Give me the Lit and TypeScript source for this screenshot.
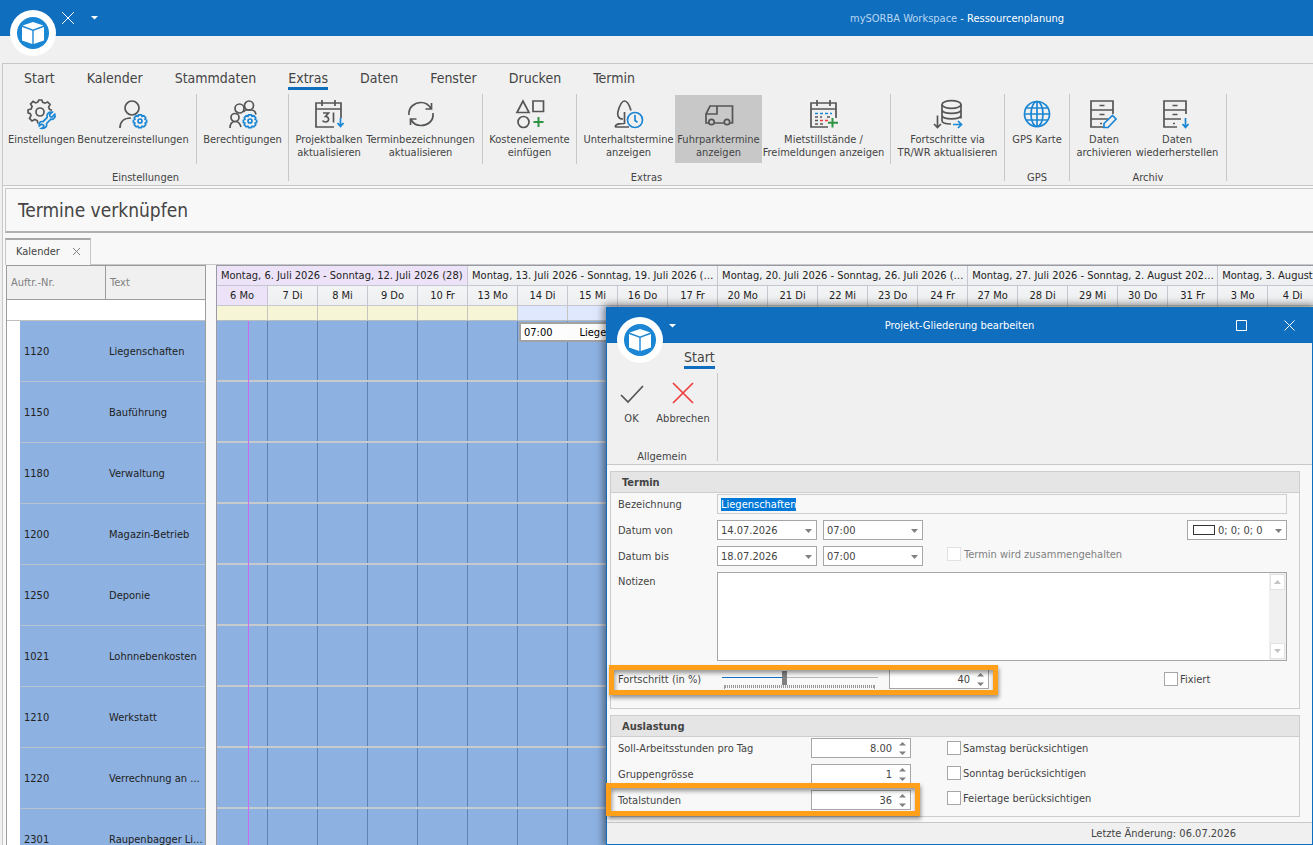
import { LitElement, html, css, svg, nothing, TemplateResult } from "lit";
import { customElement, query } from "lit/decorators.js";
import { classMap } from "lit/directives/class-map.js";
import { styleMap } from "lit/directives/style-map.js";

const gear = svg`<g class="b" transform="translate(21 21)"><path d="M-1.4 -6.2h2.8l.7 1.6 1.7-.6 1.9 1.9-.6 1.7 1.5.7v2.4l-1.5.7.6 1.7-1.9 1.9-1.7-.6-.7 1.4h-2.8l-.7-1.4-1.7.6-1.9-1.9.6-1.7-1.5-.7v-2.4l1.5-.7-.6-1.7 1.9-1.9 1.7.6z"/><circle r="2"/></g>`;

const cabinet = svg`<path d="M23 14V1H1v26h13M1 10h22M1 19h17M9.500 5.500h5M9.500 14.500h5M10 23.500h2"/>`;

const ICONS: Record<string, TemplateResult<2>> = {
  settings: svg`<circle cx="12" cy="12" r="4"/><path d="M10 23.500l-.8-3-2.400-1-2.800 1.500-2.500-2.600 1.500-2.700-.7-2.100-2.200-.8V9.800l3-.8 1-2.400-1.500-2.700 2.500-2.500 2.700 1.500 2.200-1L10.800 0h3l.9 2.300 2.300.9L19.600 2l2.500 2.500-1.500 2.700.9 2.200 2.500.8"/><path class="b" d="M26.800 14.200l-2.800 2.800-1.900-.4-.5-2 2.600-2.400c-3.500-.8-6 1.900-5 5.200l-4.200 4.300c-2.600-.8-4.500 1.200-3.700 4.300l2.200-1.800 2 .8.300 2.100-2.100 1.200c3.600.6 5.500-2 4.900-4.800l4.200-4.300c3 .7 5-2 4-5z"/>`,
  user: svg`<circle cx="13" cy="8" r="7"/><path d="M1 28c0-6.500 4-10 11-10"/>${gear}`,
  users: svg`<circle cx="10.500" cy="8.500" r="4.500"/><circle cx="20" cy="5.500" r="4.500"/><circle cx="6" cy="17.500" r="4"/><path d="M1 28c0-4 2-6.500 5.500-6.500S11 23.500 12 27M14.500 12l2-2h6c2.500 0 4 2 4.500 4.500"/>${gear}`,
  calendar: svg`<path d="M26 18V3H1v24h18M1 9h25M7 0v6M20 0v6"/><path d="M8 13h5.500L10.500 16.500c4 0 4.200 5.500 0 5.500-1.500 0-2.500-.5-2.800-1.500M18.500 12.500v10"/><path class="b" d="M25.500 18v8M22.500 23l3 3.500 3-3.500"/>`,
  refresh: svg`<path d="M2 15C1 7 8 2.500 14 2.500c4.500 0 8 2.500 10 6M26 13c1 8-5.500 12.500-12 12.500-4.500 0-8-2-10-6M24.500 3v6h-6M3.500 25v-6h6"/>`,
  shapes: svg`<path d="M7 1L1 12.500h12zM17 1h10.500v10.500H17z"/><circle cx="7.500" cy="22" r="5.500"/><path class="g" d="M22.500 17v10M17.500 22h10"/>`,
  tree: svg`<path d="M8 19C3 19 2 15 3 11.500 4.500 6 7 1 9.500 1s5 4.500 6.500 9.500M9.500 12v12M0 27c1-3.500 5-3.500 9-3.500M0 27h14"/><circle class="b" cx="20" cy="20" r="7.500"/><path class="b" d="M20 15v5.500l2.500 1.800"/>`,
  van: svg`<path d="M4 23H1v-9l4-8h7v8H1M12 6h15.500v17H25M19 23H9"/><circle cx="6.500" cy="22" r="2.700"/><circle cx="22" cy="22" r="2.700"/>`,
  rental: svg`<path d="M26 18V3H1v24h17M1 9h25M7 0v6M20 0v6"/><path class="b" d="M5 13.500h17" stroke-dasharray="3 2"/><path d="M5 17h7M17 17h5M5 20.500h3M5 24h8" stroke-dasharray="3 2"/><path class="r" d="M10 20.500h8" stroke-dasharray="3 2"/><path class="g" d="M22.500 18v9.500M18 22.700h10"/>`,
  database: svg`<ellipse cx="17.500" cy="4.500" rx="9.500" ry="3.800"/><path d="M8 4.500v16c0 2 3 3.500 9 3.500M27 4.500v14M8 10c1 4.500 18 4.500 19 0M8 15.500c1 4.500 18 4.500 19 0M3.500 15.500v12M0 24l3.500 3.500L7 24"/><path class="b" d="M19 24.500h8M24 21l3.500 3.500L24 28"/>`,
  globe: svg`<g class="b"><circle cx="14" cy="14" r="12.500"/><ellipse cx="14" cy="14" rx="6" ry="12.500"/><path d="M14 1.500v25M1.500 14h25M3.500 8h21M3.500 20h21"/></g>`,
  archive: svg`${cabinet}<path class="b" d="M14 27.500v-4l8.500-8 3.500 3.500-8 8.500z"/>`,
  restore: svg`${cabinet}<path class="b" d="M22.500 18v9M19.500 24l3 3.500 3-3.500"/>`,
  ok: svg`<path d="M3 16l7 7L25 7"/>`,
  cancel: svg`<path class="r" d="M4 4l20 20M24 4L4 24"/>`,
};

const icon = (name: string) => html`<svg class="icon" viewBox="0 0 28 28" aria-hidden="true">${ICONS[name]}</svg>`;

const logo = html`<svg class="logo" viewBox="0 0 46 46" aria-hidden="true">
  <circle cx="23" cy="23" r="23" fill="#fff"/><circle cx="23" cy="23" r="16" fill="#1a86d4"/>
  <path fill="#fff" d="M23 12l10.500 3.500L23 19.500l-10.500-4zM12 17l10.300 3.700V34L12 30.500zM34 17l-10.300 3.700V34L34 30.500z"/>
</svg>`;

const caret = html`<svg class="menu" viewBox="0 0 7 4" aria-hidden="true"><path d="M0 0h7L3.500 3.500z" fill="#fff"/></svg>`;

const shared = css`
  * { box-sizing: border-box; }
  :host { font: 11px/13px "DejaVu Sans Condensed", "Noto Sans", sans-serif; color: #444; }
  button, input, select, textarea { font: inherit; color: inherit; margin: 0; border-radius: 0; outline: none; }
  button { background: none; border: 0; padding: 0; }
  .icon { width: 28px; height: 28px; fill: none; stroke: #555; stroke-width: 1.7; overflow: visible; }
  .icon .b { stroke: #1a86d4; }
  .icon .g { stroke: #2f9444; stroke-width: 2; }
  .icon .r { stroke: #ee3d3d; }
  .logo { width: 46px; height: 46px; flex: none; }
  .menu { width: 7px; height: 4px; display: block; }
  .titlebar { height: 36px; background: #106ebe; color: #fff; display: flex; align-items: center; }
  .tabs { display: flex; align-items: flex-start; font-size: 14px; line-height: 18px; }
  .tabs a { color: inherit; text-decoration: none; border-bottom: 3px solid transparent; }
  .tabs a.on { border-color: #106ebe; }
`;

type Btn = { icon: string; label: string[]; w: number; on?: boolean };
type Group = { name: string; parts: Btn[][] };

const GROUPS: Group[] = [
  { name: "Einstellungen", parts: [
    [{ icon: "settings", label: ["Einstellungen"], w: 67 }, { icon: "user", label: ["Benutzereinstellungen"], w: 116 }],
    [{ icon: "users", label: ["Berechtigungen"], w: 81 }],
  ] },
  { name: "Extras", parts: [
    [{ icon: "calendar", label: ["Projektbalken", "aktualisieren"], w: 70 }, { icon: "refresh", label: ["Terminbezeichnungen", "aktualisieren"], w: 113 }],
    [{ icon: "shapes", label: ["Kostenelemente", "einfügen"], w: 83 }],
    [{ icon: "tree", label: ["Unterhaltstermine", "anzeigen"], w: 93 }, { icon: "van", label: ["Fuhrparktermine", "anzeigen"], w: 87, on: true }, { icon: "rental", label: ["Mietstillstände /", "Freimeldungen anzeigen"], w: 123 }],
    [{ icon: "database", label: ["Fortschritte via", "TR/WR aktualisieren"], w: 103 }],
  ] },
  { name: "GPS", parts: [[{ icon: "globe", label: ["GPS Karte"], w: 54 }]] },
  { name: "Archiv", parts: [[{ icon: "archive", label: ["Daten", "archivieren"], w: 58 }, { icon: "restore", label: ["Daten", "wiederherstellen"], w: 88 }]] },
];

const TABS = ["Start", "Kalender", "Stammdaten", "Extras", "Daten", "Fenster", "Drucken", "Termin"];

const WEEKS = [
  "Montag, 6. Juli 2026 - Sonntag, 12. Juli 2026 (28)",
  "Montag, 13. Juli 2026 - Sonntag, 19. Juli 2026 (29)",
  "Montag, 20. Juli 2026 - Sonntag, 26. Juli 2026 (30)",
  "Montag, 27. Juli 2026 - Sonntag, 2. August 2026 (31)",
  "Montag, 3. August 2026 - Sonntag, 9. August 2026 (32)",
];
const DAYS = ["6 Mo", "7 Di", "8 Mi", "9 Do", "10 Fr", "13 Mo", "14 Di", "15 Mi", "16 Do", "17 Fr", "20 Mo", "21 Di", "22 Mi",
  "23 Do", "24 Fr", "27 Mo", "28 Di", "29 Mi", "30 Do", "31 Fr", "3 Mo", "4 Di", "5 Mi", "6 Do", "7 Fr"];

const ORDERS: [string, string][] = [
  ["1120", "Liegenschaften"], ["1150", "Bauführung"], ["1180", "Verwaltung"], ["1200", "Magazin-Betrieb"],
  ["1250", "Deponie"], ["1021", "Lohnnebenkosten"], ["1210", "Werkstatt"], ["1220", "Verrechnung an ..."],
  ["2301", "Raupenbagger Li..."],
];

@customElement("main-ribbon")
export class MainRibbon extends LitElement {
  static styles = [shared, css`
    :host { display: block; flex: none; border-top: 1px solid #c8c8c8; border-bottom: 1px solid #c8c8c8; background: #f0f0f0; }
    .tabs { gap: 32px; padding: 5px 21px 0; height: 30px; }
    .body { display: flex; height: 91px; }
    .group { height: 87px; border-right: 1px solid #c8c8c8; }
    .parts { display: flex; height: 70px; }
    .part { display: flex; padding: 0 5px; }
    .part + .part { border-left: 1px solid #c8c8c8; }
    .btn { display: flex; flex-direction: column; align-items: center; gap: 5px; height: 68px; margin-top: 1px; padding-top: 5px; white-space: nowrap; line-height: 13px; }
    .btn.on { background: #c8c8c8; }
    .name { text-align: center; padding-top: 7px; }
  `];
  render() {
    return html`
      <nav class="tabs">${TABS.map((t) => html`<a href="#" class=${classMap({ on: t === "Extras" })}>${t}</a>`)}</nav>
      <div class="body">${GROUPS.map((g) => html`
        <section class="group">
          <div class="parts">${g.parts.map((p) => html`<div class="part">${p.map((b) => html`
            <button class=${classMap({ btn: true, on: !!b.on })} style=${styleMap({ width: b.w + "px" })}>
              ${icon(b.icon)}<span>${b.label[0]}${b.label[1] ? html`<br>${b.label[1]}` : nothing}</span>
            </button>`)}</div>`)}</div>
          <div class="name">${g.name}</div>
        </section>`)}</div>`;
  }
}

@customElement("resource-plan")
export class ResourcePlan extends LitElement {
  static styles = [shared, css`
    :host { display: flex; align-items: flex-start; gap: 10px; padding-left: 3px; overflow: hidden; flex: 1; min-height: 0; color: #222; }
    table { border-collapse: separate; border-spacing: 0; table-layout: fixed; flex: none; }
    th, td { padding: 0; font-weight: normal; text-align: left; overflow: hidden; white-space: nowrap; }
    .orders { width: 200px; border: 1px solid #9c9c9c; border-bottom: 0; background: #fff; }
    .orders th { height: 34px; background: #f0f0f0; color: #808080; border-bottom: 1px solid #9c9c9c; padding-left: 4px; }
    .orders .c1 { width: 13px; }
    .orders .c2 { width: 85px; }
    .orders thead th + th { border-left: 1px solid #9c9c9c; }
    .filter td { height: 21px; border-bottom: 1px solid #c0c0c0; }
    .order td { height: 61px; background: #8db1e1; border-bottom: 1px solid #b9c3cf; padding-left: 4px; }
    .order td:first-child { background: #fff; border-color: #fff; }
    .chart { position: relative; border-left: 1px solid #9a9aa6; border-top: 1px solid #9a9aa6; flex: none; }
    .plan { width: 1251px; }
    .plan col { width: 50px; }
    .plan col:first-child { width: 51px; }
    .plan th { background: linear-gradient(#f3f4f6, #eeeff1); border-right: 1px solid #c6c6d0; border-bottom: 1px solid #c6c6d0; height: 20px; }
    .plan .week { padding: 0 1px 0 4px; text-overflow: ellipsis; }
    .plan .day { text-align: center; }
    .plan th.now { background: #ece3f8; }
    .plan .load td { height: 15px; background: #dfe8fc; border-right: 1px solid #c6c6c0; border-bottom: 1px solid #b8bcc0; }
    .plan .load td.low { background: #f6f6d6; }
    .plan .row td { height: 61px; background: #8db1e1; box-shadow: inset -1px 0 #5f83b1; border-bottom: 2px solid #c6cacf; }
    .today { position: absolute; left: 31px; top: 55px; bottom: 0; width: 1px; background: #c86af0; }
    .event { position: absolute; left: 302px; top: 56px; width: 200px; height: 20px; border: 2px solid #a2a2a2; background: linear-gradient(90deg, #fff, #f6f6f6); color: #000; display: flex; gap: 27px; align-items: center; padding-left: 3px; white-space: nowrap; }
  `];
  render() {
    return html`
      <table class="orders">
        <colgroup><col class="c1"><col class="c2"><col></colgroup>
        <thead><tr><th colspan="2">Auftr.-Nr.</th><th>Text</th></tr></thead>
        <tbody>
          <tr class="filter"><td colspan="3"></td></tr>
          ${ORDERS.map(([n, t]) => html`<tr class="order"><td></td><td>${n}</td><td>${t}</td></tr>`)}
        </tbody>
      </table>
      <div class="chart">
        <table class="plan">
          <colgroup>${DAYS.map(() => html`<col>`)}</colgroup>
          <thead>
            <tr>${WEEKS.map((w, i) => html`<th class=${classMap({ week: true, now: i === 0 })} colspan="5">${w}</th>`)}</tr>
            <tr>${DAYS.map((d, i) => html`<th class=${classMap({ day: true, now: i === 0 })}>${d}</th>`)}</tr>
          </thead>
          <tbody>
            <tr class="load">${DAYS.map((_, i) => html`<td class=${classMap({ low: i < 6 || i > 9 })}></td>`)}</tr>
            ${ORDERS.map(() => html`<tr class="row">${DAYS.map(() => html`<td></td>`)}</tr>`)}
          </tbody>
        </table>
        <div class="today"></div>
        <div class="event"><span>07:00</span><span>Liegenschaften</span></div>
      </div>`;
  }
}

@customElement("structure-dialog")
export class StructureDialog extends LitElement {
  @query("#title") titleField!: HTMLInputElement;

  static styles = [shared, css`
    :host { display: flex; flex-direction: column; background: #f8f8f8; border: 1px solid #106ebe; border-top: 0; box-shadow: 0 0 8px 2px rgba(0, 0, 0, .5); }
    .titlebar { position: relative; flex: none; justify-content: center; margin: 0 -1px; }
    .titlebar .logo { position: absolute; left: 11px; top: 10px; }
    .titlebar .menu { position: absolute; left: 63px; top: 17px; }
    .window { position: absolute; right: 0; top: 0; height: 36px; display: flex; }
    .window button { width: 48px; display: grid; place-items: center; }
    .window svg { width: 11px; height: 11px; fill: none; stroke: #fff; }
    .ribbon { flex: none; background: #f0f0f0; border-bottom: 1px solid #c8c8c8; height: 122px; }
    .tabs { padding: 5px 77px 0; height: 30px; }
    .group { width: 111px; height: 88px; border-right: 1px solid #c8c8c8; display: flex; flex-direction: column; }
    .actions { display: flex; flex: 1; }
    .actions button { display: flex; flex-direction: column; align-items: center; gap: 5px; padding-top: 6px; width: 49px; }
    .actions button + button { width: 54px; }
    .name { text-align: center; height: 11px; }
    .content { flex: 1; padding: 6px 12px 0 3px; display: flex; flex-direction: column; gap: 6px; }
    fieldset { margin: 0; padding: 0; min-width: 0; border: 1px solid #cdcdcd; }
    .head { height: 21px; background: #e5e5e5; border-bottom: 1px solid #cdcdcd; font-weight: bold; line-height: 21px; padding-left: 11px; margin: 0; font-size: 11px; }
    .form { padding: 1px 12px 6px 7px; display: flex; flex-direction: column; gap: 6px; }
    .form.first { padding-bottom: 19px; }
    .row { display: flex; align-items: center; height: 20px; position: relative; }
    .row.tall { height: 89px; align-items: flex-start; }
    .row.last { margin-top: 2px; }
    .key { width: 99px; flex: none; white-space: nowrap; }
    .row.tall .key { padding-top: 3px; }
    .form.load { flex-direction: row; gap: 36px; }
    .load .key { width: 193px; }
    .amounts { display: flex; flex-direction: column; gap: 6px; }
    .options { display: flex; flex-direction: column; gap: 5px; }
    .options .check { height: 20px; }
    .text { flex: 1; height: 20px; border: 1px solid #cdcdcd; background: transparent; padding: 0 3px; }
    .text::selection { background: #0078d7; color: #fff; }
    .box { width: 100px; height: 20px; flex: none; border: 1px solid #a6a6a6; background: #fff; display: flex; align-items: center; position: relative; }
    .box select { appearance: none; border: 0; background: none; width: 100%; height: 18px; padding: 0 0 0 3px; }
    .box .drop { position: absolute; right: 4px; top: 8px; width: 7px; height: 4px; fill: #808080; pointer-events: none; }
    .box input { border: 0; background: none; text-align: right; width: 100%; height: 18px; padding: 0 18px 0 0; }
    .box .spin { position: absolute; right: 4px; top: 3px; width: 7px; height: 13px; fill: #808080; }
    .swatch { width: 22px; height: 10px; border: 1px solid #333; margin-left: 5px; flex: none; }
    .box + .box { margin-left: 6px; }
    .box + .box.right { margin-left: auto; }
    .check { display: flex; align-items: center; gap: 2px; white-space: nowrap; }
    .check input { appearance: none; width: 14px; height: 14px; border: 1px solid #a6a6a6; background: #fff; }
    .check.off { margin-left: 24px; color: #808080; gap: 3px; height: 20px; padding-bottom: 4px; }
    .check.off input { border-color: #e2e2e2; }
    .fixed { width: 123px; margin-left: auto; }
    .notes { flex: 1; height: 89px; border: 1px solid #a6a6a6; background: #fff; display: flex; }
    .notes textarea { flex: 1; border: 0; resize: none; background: none; padding: 3px; overflow: hidden; }
    .scroll { width: 17px; background: #f0f0f0; display: flex; flex-direction: column; justify-content: space-between; align-items: center; padding: 1px 0; }
    .scroll button { width: 15px; height: 16px; border: 1px solid #e2e2e2; background: #fff; display: grid; place-items: center; }
    .scroll svg { width: 7px; height: 4px; fill: #c4c4c4; }
    .slider { width: 156px; height: 20px; margin: 0 11px 0 5px; position: relative; }
    .slider input { appearance: none; display: block; width: 156px; height: 16px; background: none; padding-top: 1px; }
    .slider input::-webkit-slider-runnable-track { height: 14px; background: linear-gradient(#106ebe, #106ebe) 0 6px / 40% 1px no-repeat, linear-gradient(#b4b4b4, #b4b4b4) 0 6px / 100% 1px no-repeat; }
    .slider input::-webkit-slider-thumb { appearance: none; width: 5px; height: 14px; background: #808080; }
    .ticks { height: 4px; margin: 0 3px 0 2px; border: 1px solid #999; border-width: 0 1px; background: repeating-linear-gradient(90deg, #999 0 1px, transparent 1px 2px) 0 0 / 100% 3px no-repeat; }
    .mark { position: absolute; border: 5px solid #ff9f1a; box-shadow: 1px 3px 4px rgba(0, 0, 0, .4), inset 1px 3px 4px rgba(0, 0, 0, .4); pointer-events: none; }
    .mark.progress { left: -9px; top: -4px; width: 389px; height: 30px; }
    .mark.total { left: -12px; top: -7px; width: 314px; height: 33px; }
    .foot { flex: none; height: 22px; border-top: 1px solid #c8c8c8; background: #f0f0f0; text-align: right; padding: 4px 76px 0 0; }
  `];

  firstUpdated() {
    this.titleField.focus();
    this.titleField.select();
  }

  private drop = html`<svg class="drop" viewBox="0 0 7 4" aria-hidden="true"><path d="M0 0h7L3.500 4z"/></svg>`;

  private combo(label: string, value: string) {
    return html`<span class="box"><select aria-label=${label}><option>${value}</option></select>${this.drop}</span>`;
  }

  private spin(id: string, value: string) {
    return html`<span class="box"><input id=${id} type="text" inputmode="decimal" .value=${value}>
      <svg class="spin" viewBox="0 0 7 13" aria-hidden="true"><path d="M0 3.500h7L3.500 0zM0 9.500h7L3.500 13z"/></svg></span>`;
  }

  private check(label: string) {
    return html`<label class="check"><input type="checkbox">${label}</label>`;
  }

  render() {
    return html`
      <header class="titlebar">
        ${logo}${caret}<span>Projekt-Gliederung bearbeiten</span>
        <div class="window">
          <button aria-label="Maximieren"><svg viewBox="0 0 11 11"><path d="M.5.5h10v10H.5z"/></svg></button>
          <button aria-label="Schliessen"><svg viewBox="0 0 11 11"><path d="M.5.5l10 10M10.500.5l-10 10"/></svg></button>
        </div>
      </header>
      <div class="ribbon">
        <nav class="tabs"><a href="#" class="on">Start</a></nav>
        <div class="group">
          <div class="actions">
            <button>${icon("ok")}<span>OK</span></button>
            <button>${icon("cancel")}<span>Abbrechen</span></button>
          </div>
          <div class="name">Allgemein</div>
        </div>
      </div>
      <div class="content">
        <fieldset aria-label="Termin">
          <h2 class="head">Termin</h2>
          <div class="form first">
            <div class="row"><label class="key" for="title">Bezeichnung</label><input id="title" class="text" .value=${"Liegenschaften"}></div>
            <div class="row"><span class="key">Datum von</span>${this.combo("Datum von", "14.07.2026")}${this.combo("Zeit von", "07:00")}
              <span class="box right"><span class="swatch"></span><select aria-label="Farbe"><option>0; 0; 0; 0</option></select>${this.drop}</span></div>
            <div class="row"><span class="key">Datum bis</span>${this.combo("Datum bis", "18.07.2026")}${this.combo("Zeit bis", "07:00")}
              <label class="check off"><input type="checkbox" disabled>Termin wird zusammengehalten</label></div>
            <div class="row tall"><label class="key" for="notes">Notizen</label>
              <div class="notes"><textarea id="notes"></textarea>
                <div class="scroll">
                  <button aria-label="Nach oben"><svg viewBox="0 0 7 4"><path d="M0 4h7L3.500 0z"/></svg></button>
                  <button aria-label="Nach unten"><svg viewBox="0 0 7 4"><path d="M0 0h7L3.500 4z"/></svg></button>
                </div></div></div>
            <div class="row last"><label class="key" for="progress">Fortschritt (in %)</label>
              <div class="slider"><input type="range" min="0" max="100" .value=${"40"} aria-label="Fortschritt"><div class="ticks"></div></div>
              ${this.spin("progress", "40")}
              <label class="check fixed"><input type="checkbox">Fixiert</label>
              <span class="mark progress"></span></div>
          </div>
        </fieldset>
        <fieldset aria-label="Auslastung">
          <h2 class="head">Auslastung</h2>
          <div class="form load">
            <div class="amounts">
              <div class="row"><label class="key" for="hours">Soll-Arbeitsstunden pro Tag</label>${this.spin("hours", "8.00")}</div>
              <div class="row"><label class="key" for="size">Gruppengrösse</label>${this.spin("size", "1")}</div>
              <div class="row"><label class="key" for="total">Totalstunden</label>${this.spin("total", "36")}<span class="mark total"></span></div>
            </div>
            <div class="options">
              ${["Samstag berücksichtigen", "Sonntag berücksichtigen", "Feiertage berücksichtigen"].map((t) => this.check(t))}
            </div>
          </div>
        </fieldset>
      </div>
      <footer class="foot">Letzte Änderung: 06.07.2026</footer>`;
  }
}

@customElement("app-root")
export class AppRoot extends LitElement {
  static styles = [shared, css`
    :host { display: flex; flex-direction: column; height: 100vh; overflow: hidden; position: relative; background: #f0f0f0; }
    .titlebar { flex: none; position: relative; justify-content: flex-end; padding-right: 249px; }
    .titlebar .logo { position: absolute; left: 10px; top: 10px; }
    .quick { position: absolute; left: 62px; top: 12px; display: flex; align-items: center; gap: 17px; }
    .quick button svg { width: 12px; height: 12px; display: block; stroke: #fff; }
    .app { color: #b9d6f2; white-space: pre; }
    .frame { flex: 1; min-height: 0; margin: 27px 0 0 2px; border-left: 1px solid #c8c8c8; background: #f8f8f8; display: flex; flex-direction: column; }
    .banner { flex: none; margin: 2px 0 0 2px; height: 45px; border: 1px solid #c8c8c8; border-bottom: 2px solid #b0b0b0; border-right: 0; padding-left: 12px; font-size: 19px; line-height: 42px; font-weight: normal; }
    .docs { flex: none; margin: 5px 0 0 2px; height: 27px; display: flex; }
    .doc { width: 86px; border: 1px solid #c8c8c8; border-top: 2px solid #a8a8a8; border-bottom: 0; display: flex; align-items: center; justify-content: space-between; padding: 0 10px 2px; }
    .doc svg { width: 7px; height: 7px; stroke: #808080; display: block; }
    .rest { flex: 1; border-bottom: 1px solid #c8c8c8; }
    .dialog { position: absolute; left: 606px; right: 0; top: 307px; bottom: 0; }
  `];
  render() {
    return html`
      <header class="titlebar">
        ${logo}
        <div class="quick">
          <button aria-label="Schliessen"><svg viewBox="0 0 12 12"><path d="M0 0l12 12M12 0L0 12"/></svg></button>
          ${caret}
        </div>
        <span class="app">mySORBA Workspace </span><span>- Ressourcenplanung</span>
      </header>
      <div class="frame">
        <main-ribbon></main-ribbon>
        <h1 class="banner">Termine verknüpfen</h1>
        <div class="docs">
          <div class="doc"><span>Kalender</span><button aria-label="Tab schliessen"><svg viewBox="0 0 7 7"><path d="M0 0l7 7M7 0L0 7"/></svg></button></div>
          <div class="rest"></div>
        </div>
        <resource-plan></resource-plan>
      </div>
      <structure-dialog class="dialog" role="dialog" aria-label="Projekt-Gliederung bearbeiten"></structure-dialog>`;
  }
}
